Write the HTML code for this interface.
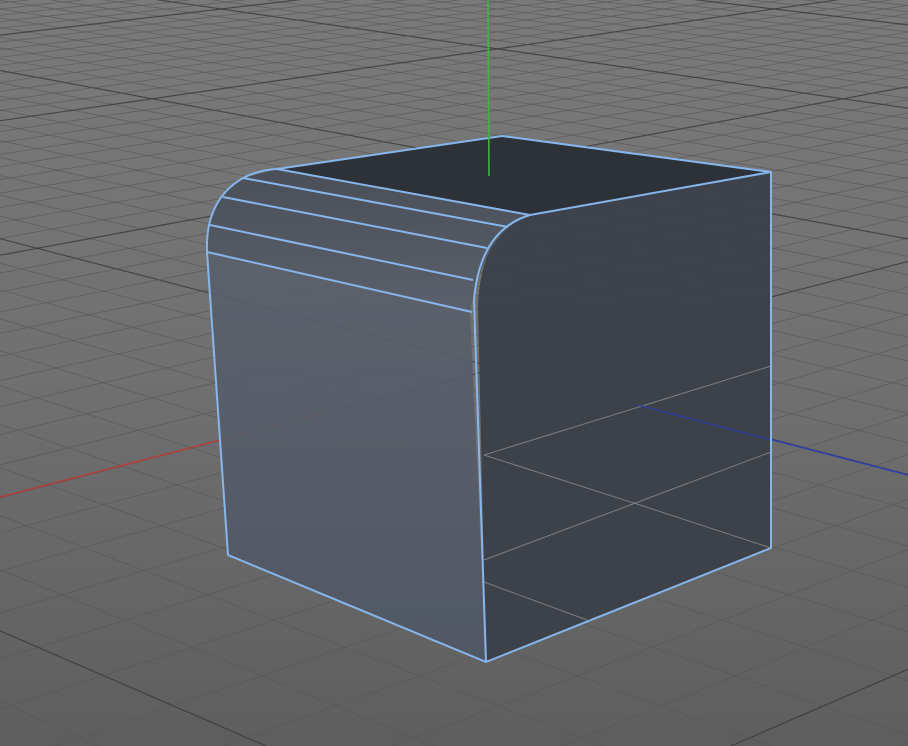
<!DOCTYPE html>
<html><head><meta charset="utf-8"><style>
html,body{margin:0;padding:0;background:#6a6a6a;width:908px;height:746px;overflow:hidden;}
svg{display:block}
</style></head><body>
<svg id="s" width="908" height="746" viewBox="0 0 908 746" xmlns="http://www.w3.org/2000/svg">
<defs>
<linearGradient id="bg" x1="0" y1="0" x2="0" y2="1">
<stop offset="0" stop-color="#7a7a7a"/><stop offset="0.5" stop-color="#707070"/><stop offset="1" stop-color="#5e5e5e"/>
</linearGradient>
<linearGradient id="front" x1="0" y1="0" x2="0" y2="1">
<stop offset="0" stop-color="#59606b"/><stop offset="1" stop-color="#4f5765"/>
</linearGradient>
<linearGradient id="bev" x1="0" y1="0" x2="0" y2="1">
<stop offset="0" stop-color="#4a4f57"/><stop offset="1" stop-color="#5a616c"/>
</linearGradient>
</defs>
<rect width="908" height="746" fill="url(#bg)"/>
<g id="grid"></g>
<line x1="0" y1="497" x2="333" y2="411" stroke="#b8403a" stroke-width="1.5"/>
<line x1="638" y1="405" x2="908" y2="475" stroke="#2f3fb0" stroke-width="1.5"/>
<path d="M530,215 Q482,228 478,305 L486,662 L771,548 L771,172 Z" fill="#3b4049" fill-opacity="0.97"/>
<g stroke="#8d8d8d" stroke-width="1" opacity="0.8">
<line x1="484" y1="455" x2="771" y2="366"/>
<line x1="484" y1="455" x2="640" y2="505"/>
<line x1="640" y1="505" x2="771" y2="548"/>
<line x1="484" y1="560" x2="771" y2="452"/>
<line x1="484" y1="582" x2="587" y2="620"/>
</g>
<line x1="638" y1="405" x2="771" y2="440" stroke="#2f3fb0" stroke-width="1.5" opacity="0.8"/>
<path d="M277,169 L502,136 L771,172 L530,215 Z" fill="#2d3138"/>
<path d="M207,252 L470,312 L486,662 L228,555 Z" fill="url(#front)" fill-opacity="0.9"/>
<path d="M277,169 L530,215 Q485,230 470,312 L207,252 Q205,200 243,178 Z" fill="url(#bev)"/>
<g stroke="#87b6ec" stroke-width="2" fill="none" stroke-linejoin="round">
<path d="M277,169 L502,136 L771,172 L771,548 L486,662 L228,555 L207,252 Q205,200 243,178 Q258,170 277,169"/>
<path d="M277,169 L530,215"/>
<path d="M530,215 Q480,230 474,300 L486,662"/>
<path d="M771,172 L530,215"/>
<path d="M243,178 L508,227"/>
<path d="M223,197 L487,248"/>
<path d="M210,225 L473,280"/>
<path d="M207,252 L472,312"/>
</g>
<line x1="488" y1="0" x2="489" y2="176" stroke="#3fb43f" stroke-width="1.6"/>
</svg>
<script>
(function(){
var O=[498,368],V1=[3260,-350],V2=[-2266,-350],a=0.02,b=0.02;
function P(u,v){var d=1+u*a+v*b;return [(O[0]+u*a*V1[0]+v*b*V2[0])/d,(O[1]+u*a*V1[1]+v*b*V2[1])/d,d];}
var g=document.getElementById('grid'),html='';
function line(f,major){var pts=[];for(var t=-120;t<=400;t+=0.5){var p=f(t);if(p[2]>0.06&&p[0]>-200&&p[0]<1100&&p[1]>-100&&p[1]<850){pts.push(p[0].toFixed(1)+','+p[1].toFixed(1));}}
if(pts.length>1)html+='<polyline points="'+pts.join(' ')+'" fill="none" stroke="'+(major?'#3a3a3a':'#565656')+'" stroke-width="'+(major?1.2:0.8)+'" opacity="'+(major?0.8:0.7)+'"/>';}
for(var k=-50;k<=200;k++){(function(k){line(function(t){return P(t,k);},k%10==0);line(function(t){return P(k,t);},k%10==0);})(k);}
g.innerHTML=html;
})();
</script>
</body></html>
